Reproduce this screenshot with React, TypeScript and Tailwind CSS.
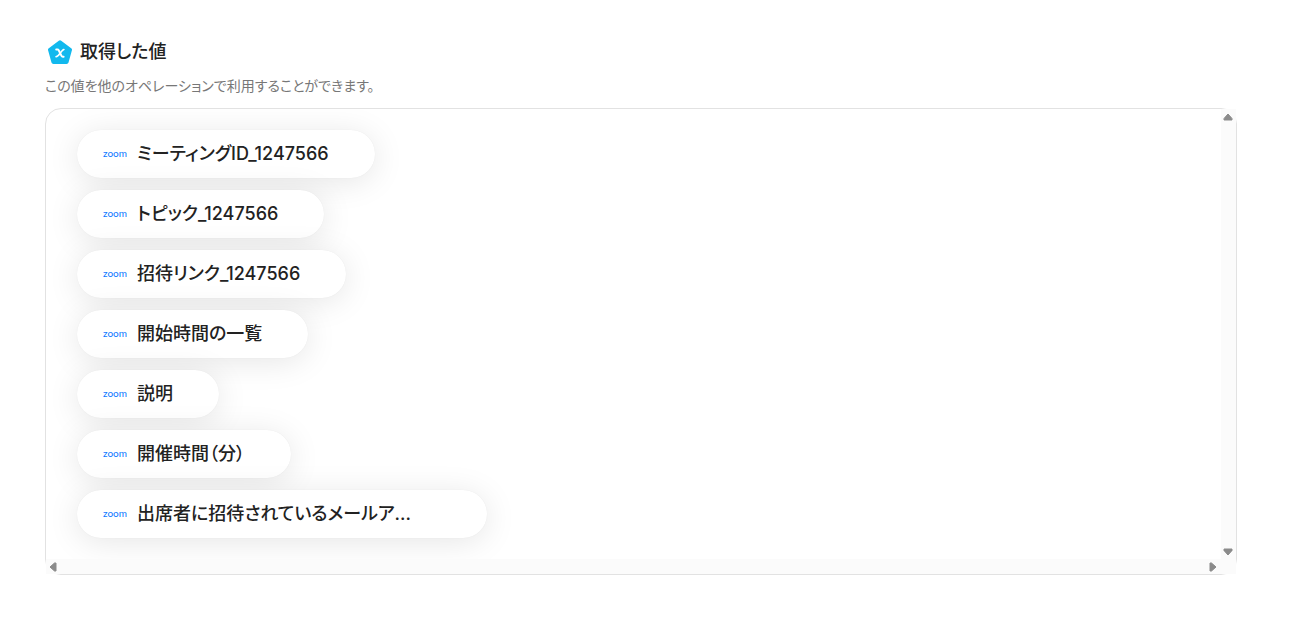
type Value = { name: string; wide?: boolean };

const values: Value[] = [
  { name: 'ミーティングID_1247566' },
  { name: 'トピック_1247566' },
  { name: '招待リンク_1247566' },
  { name: '開始時間の一覧' },
  { name: '説明' },
  { name: '開催時間（分）' },
  { name: '出席者に招待されているメールア...', wide: true },
];

function VariableIcon() {
  return (
    <svg viewBox="0 0 24 24" className="size-6 shrink-0" aria-hidden="true">
      <path
        d="M12 2.4 22 9.8 18.6 21.9H5.4L2 9.800Z"
        fill="#12b9ee"
        stroke="#12b9ee"
        strokeWidth="4"
        strokeLinejoin="round"
      />
      <path
        d="M8.200 9.500H9.500C10 9.500 10.400 9.800 10.700 10.300L13.500 15.900C13.800 16.500 14.200 16.800 14.800 16.800H15.600"
        fill="none"
        stroke="#fff"
        strokeWidth="2"
        strokeLinecap="round"
      />
      <path d="M15.900 9.500C14.800 9.700 14 10.500 12.100 13.200C10.300 15.800 9.200 16.700 8 16.800" fill="none" stroke="#fff" strokeWidth="1.600" strokeLinecap="round" />
    </svg>
  );
}

function Arrow({ label, className }: { label: string; className: string }) {
  return (
    <button type="button" aria-label={label} className="flex size-[15px] items-center justify-start pl-[2px]">
      <svg viewBox="0 0 10 8" className={`h-2 w-[10px] shrink-0 ${className}`} aria-hidden="true">
        <path d="M5 1 9 5.500V7H1V5.500Z" fill="#8b8b8b" stroke="#8b8b8b" strokeWidth="1" strokeLinejoin="round" />
      </svg>
    </button>
  );
}

function ValueChip({ name, wide }: Value) {
  return (
    <li
      className={`flex h-12 items-center gap-2 rounded-full bg-white pr-[46px] pl-[26px] shadow-[0_0_1px_rgba(0,0,0,0.08),0_4px_32px_rgba(0,0,0,0.1)] ${
        wide ? 'w-[410px]' : ''
      }`}
    >
      <span className="w-[26px] shrink-0 pb-0.5 font-['Lato',sans-serif] text-[10px] leading-4 text-[#0b78ff]">zoom</span>
      <span className="text-lg font-medium whitespace-nowrap">{name}</span>
    </li>
  );
}

export default function App() {
  return (
    <main className="bg-white pt-9 pr-[57px] pb-11 pl-[45px] font-['Inter','Noto_Sans_CJK_JP',sans-serif] text-[#222] [font-feature-settings:'palt']">
      <header>
        <div className="flex h-8 items-center gap-2 pl-[3px]">
          <VariableIcon />
          <h1 className="text-lg font-medium">取得した値</h1>
        </div>
        <p className="mt-2 text-sm text-[#777]">この値を他のオペレーションで利用することができます。</p>
      </header>
      <section
        aria-label="取得した値"
        className="mt-3 grid grid-cols-[minmax(0,1fr)_15px] grid-rows-[auto_15px] rounded-2xl border border-[#e2e2e2]"
      >
        <ul className="flex flex-col items-start gap-3 overflow-hidden rounded-tl-2xl px-[31px] py-[21px]">
          {values.map((value) => (
            <ValueChip key={value.name} {...value} />
          ))}
        </ul>
        <div className="flex flex-col justify-between bg-[#fbfbfb]">
          <Arrow label="上へスクロール" className="" />
          <Arrow label="下へスクロール" className="rotate-180" />
        </div>
        <div className="flex justify-between bg-[#fbfbfb]">
          <Arrow label="左へスクロール" className="-rotate-90" />
          <Arrow label="右へスクロール" className="rotate-90" />
        </div>
        <div className="bg-[#fbfbfb]" />
      </section>
    </main>
  );
}
